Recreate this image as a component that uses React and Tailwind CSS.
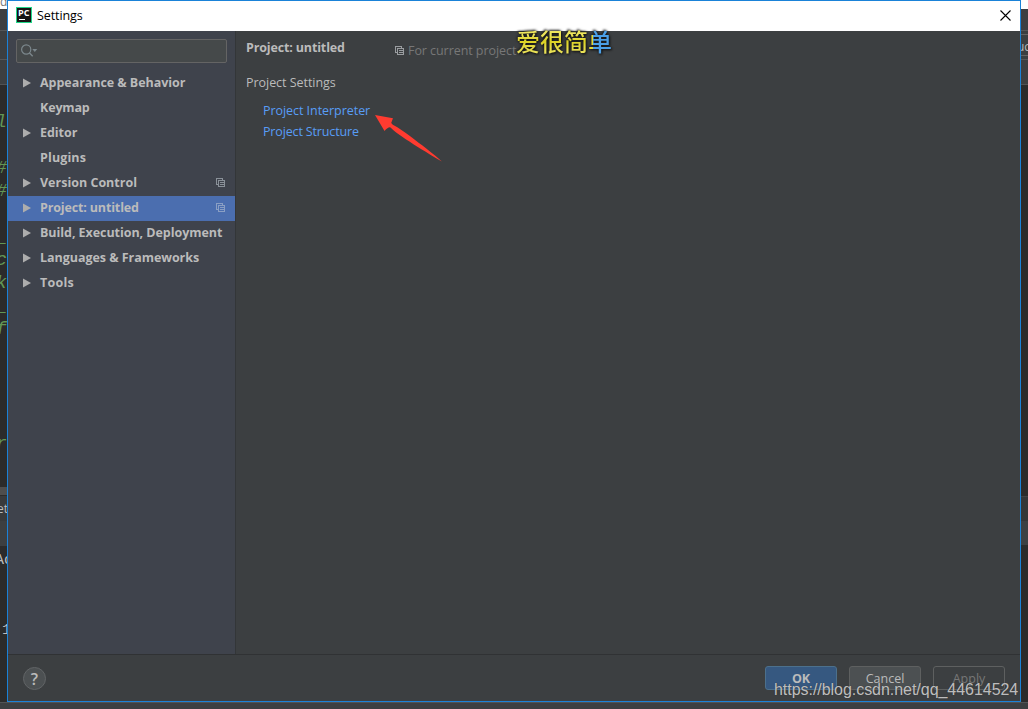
import React from "react";

function CopyIcon({ className = "" }) {
  return (
    <svg className={`shrink-0 ${className}`} width="10" height="10" viewBox="0 0 10 10" fill="none" stroke="currentColor" shapeRendering="crispEdges">
      <path d="M2.5 6.5h-2v-6h6v2" />
      <path d="M2.5 2.5h6v6h-6z" />
      <path d="M4 4.5h4M4 6.5h4" />
    </svg>
  );
}

const items = [
  { label: "Appearance & Behavior", arrow: true, tracking: "tracking-[-0.05px]" },
  { label: "Keymap", tracking: "tracking-[-0.15px]" },
  { label: "Editor", arrow: true, tracking: "tracking-[-0.05px]" },
  { label: "Plugins", tracking: "tracking-[0.12px]" },
  { label: "Version Control", arrow: true, copy: true, tracking: "tracking-[0px]" },
  { label: "Project: untitled", arrow: true, copy: true, selected: true, tracking: "tracking-[-0.15px]" },
  { label: "Build, Execution, Deployment", arrow: true, tracking: "tracking-[-0.05px]" },
  { label: "Languages & Frameworks", arrow: true, tracking: "tracking-[-0.04px]" },
  { label: "Tools", arrow: true, tracking: "tracking-[0.25px]" },
];

function NavItem({ label, arrow, copy, selected, tracking }) {
  return (
    <div className={`flex h-[25px] items-center pr-[9px] pb-[2px] pl-[15px] ${selected ? "bg-[#4b6eaf]" : ""}`}>
      <svg className="mr-[9px] shrink-0" width="8" height="10" viewBox="0 0 8 10">
        {arrow && <path d="M0 .5 8 5 0 9.5z" fill="#adadad" />}
      </svg>
      <span className={`flex-1 whitespace-nowrap text-[12.5px] leading-[23px] font-bold text-[#bbbbbb] ${tracking}`}>{label}</span>
      {copy && <CopyIcon className={selected ? "text-[#8a9fc4]" : "text-[#8a9199]"} />}
    </div>
  );
}

const code = [
  ["h-[36px] pt-[13px]", "l"],
  ["h-[46px] pt-[23px]", "#,"],
  ["h-[23px]", "#,"],
  ["h-[46px] pt-[23px]", "_"],
  ["h-[23px]", "c"],
  ["h-[23px]", "k"],
  ["h-[23px]", "_"],
  ["h-[23px]", "f"],
];

function LeftEditor() {
  return (
    <div className="flex h-[702px] w-[7px] shrink-0 flex-col overflow-hidden bg-[#2b2b2b]">
      <div className="h-[9px] shrink-0 overflow-hidden bg-white text-[12px] leading-[4px] text-[#777]">d</div>
      <div className="h-[22px] shrink-0 border-b border-[#555759] bg-[#3c3f41]" />
      <div className="h-[29px] shrink-0 border-b border-[#555759] bg-[#3c3f41]" />
      <div className="h-[25px] shrink-0 border-b border-[#515355] bg-[#3c3f41]" />
      <div className="flex h-[402px] shrink-0 flex-col pt-[13px] font-['Liberation_Mono',monospace] text-[18px] leading-[23px] text-[#629755] italic">
        {code.map(([cls, t], i) => (
          <div key={i} className={`-ml-[4px] shrink-0 whitespace-nowrap ${cls}`}>{t}</div>
        ))}
        <div className="-ml-[4px] pt-[92px]">r</div>
      </div>
      <div className="h-[8px] shrink-0 bg-[#4e4e4e]" />
      <div className="h-[26px] shrink-0 border-t border-[#2b2b2b] bg-[#383a3c] text-[12px] leading-[26px] text-[#bbb]"><span className="-ml-[3px]">et</span></div>
      <div className="h-[25px] shrink-0 bg-[#3c3f41]" />
      <div className="flex flex-1 flex-col font-['Liberation_Mono',monospace] text-[15px] text-[#bbb]">
        <div className="-ml-[5px] h-[70px] leading-[30px] whitespace-nowrap">Ac</div>
        <div className="-ml-[7px] leading-[30px] whitespace-nowrap">.1</div>
      </div>
    </div>
  );
}

function RightEditor() {
  return (
    <div className="flex h-[702px] w-[7px] shrink-0 flex-col overflow-hidden bg-[#2b2b2b]">
      <div className="h-[9px] shrink-0 bg-white" />
      <div className="h-[22px] shrink-0 border-b border-[#555759] bg-[#3c3f41]" />
      <div className="h-[3px] shrink-0 bg-[#3c3f41]" />
      <div className="h-[22px] shrink-0 border-y border-[#646464] bg-[#3c3f41] text-[12px] leading-[23px] text-[#bbb]"><span className="-ml-[4px]">uc</span></div>
      <div className="h-[4px] shrink-0 border-b border-[#555759] bg-[#3c3f41]" />
      <div className="h-[25px] shrink-0 border-b border-[#515355] bg-[#3c3f41]" />
      <div className="h-[411px] shrink-0" />
      <div className="h-[25px] shrink-0 border-t border-[#414345] bg-[#343638]" />
      <div className="h-[24px] shrink-0 bg-[#3c4043]" />
    </div>
  );
}

function Titlebar() {
  return (
    <div className="flex h-[30px] shrink-0 items-center bg-white pr-[10px] pl-[8px]">
      <svg className="mb-[2px]" width="16" height="16" viewBox="0 0 16 16">
        <rect width="16" height="16" fill="#21d789" />
        <rect x="1" y="1" width="14" height="14" fill="#151515" />
        <text x="2" y="8.6" fontSize="9" fontWeight="700" fill="#fff" textLength="11.5" lengthAdjust="spacingAndGlyphs" className="font-['Open_Sans',sans-serif]">PC</text>
        <rect x="3" y="12" width="6" height="1" fill="#fff" />
      </svg>
      <span className="ml-[5px] flex-1 text-[12.5px] tracking-[-0.1px] text-black">Settings</span>
      <svg className="-mr-px mb-[2px]" width="11" height="11" viewBox="0 0 11 11" stroke="#000" strokeWidth="1.1">
        <path d="M.5.5l10 10M10.5.5l-10 10" />
      </svg>
    </div>
  );
}

function Sidebar() {
  return (
    <div className="flex w-[228px] shrink-0 flex-col border-r border-[#333638] bg-[#3f434c]">
      <div className="mt-[8px] ml-[8px] flex h-[24px] w-[211px] shrink-0 items-center rounded-[2px] border border-[#646464] bg-[#45494a] pl-[4px]">
        <svg className="mb-px" width="17" height="13" viewBox="0 0 17 13" fill="none" stroke="#7b878c">
          <circle cx="5.2" cy="5.5" r="4.6" strokeWidth="1.2" />
          <path d="M8.3 8.8l3.4 3.4" strokeWidth="1.4" />
          <path d="M11.3 5h5l-2.500 3z" fill="#7b878c" stroke="none" />
        </svg>
      </div>
      <div className="mt-[8px] flex flex-col">
        {items.map((it) => <NavItem key={it.label} {...it} />)}
      </div>
    </div>
  );
}

function Content() {
  return (
    <div className="flex flex-1 flex-col pl-[10px] text-[12.5px] text-[#bbbbbb]">
      <div className="flex h-[34px] shrink-0 whitespace-nowrap">
        <div className="w-[149px] pt-[6px] leading-[22px] font-bold tracking-[-0.15px]">Project: untitled</div>
        <div className="mt-[9px] flex h-[22px] items-center text-[#777777]">
          <CopyIcon className="mr-[3px] text-[#9a9da0]" />
          <span className="leading-[22px] tracking-[-0.06px]">For current project</span>
        </div>
      </div>
      <div className="mt-[7px] h-[22px] leading-[22px] tracking-[-0.04px]">Project Settings</div>
      <div className="mt-[6px] ml-[17px] flex flex-col leading-[21px] text-[#589df6]">
        <a className="tracking-[-0.05px]">Project Interpreter</a>
        <a className="tracking-[-0.15px]">Project Structure</a>
      </div>
    </div>
  );
}

export default function App() {
  return (
    <div className="relative flex h-[709px] w-[1028px] flex-col overflow-hidden bg-[#3c3f41] font-['Open_Sans','Noto_Sans',sans-serif]">
      <div className="flex h-[702px] shrink-0">
        <LeftEditor />
        <div className="flex h-[702px] w-[1014px] flex-col border border-[#1a82d8] bg-[#3c3f41]">
          <Titlebar />
          <div className="flex h-[623px] shrink-0">
            <Sidebar />
            <Content />
          </div>
          <div className="flex flex-1 items-start border-t border-[#303234] pr-[15px] pl-[15px] text-[12.5px]">
            <div className="mt-[12px] flex h-[23px] w-[23px] items-center justify-center rounded-full border border-[#616466] bg-[#4c5052] text-[16px] font-semibold text-[#bbbbbb]">?</div>
            <div className="mt-[11px] ml-auto flex gap-[12px] leading-[22px]">
              <div className="h-[24px] w-[72px] rounded-[3px] border border-[#4c708c] bg-[#365880] pt-[1px] text-center font-bold text-[#bbbbbb]">OK</div>
              <div className="h-[24px] w-[72px] rounded-[3px] border border-[#5e6060] bg-[#4c5052] pt-[1px] text-center text-[#bbbbbb]">Cancel</div>
              <div className="h-[24px] w-[72px] rounded-[3px] border border-[#5e6060] pt-[1px] text-center text-[#777777]">Apply</div>
            </div>
          </div>
        </div>
        <RightEditor />
      </div>
      <div className="h-[7px] shrink-0 border-t border-[#515355] bg-[#3c3f41]" />

      <svg className="absolute top-[114px] left-[374px]" width="70" height="50" viewBox="0 0 70 50">
        <path d="M1 1 19 4.300 17.200 9Q18 10.500 22 12.500C30 17 60 40 68 47.500C55 40 22 20 16.500 13.500Q14.500 12.500 10.500 17z" fill="#ff3b30" />
      </svg>
      <div className="absolute top-[24px] left-[516px] flex font-['Noto_Sans_CJK_SC',sans-serif] text-[24px] leading-[34px] font-medium whitespace-nowrap [filter:drop-shadow(1px_1px_1px_#111)_drop-shadow(-1px_-1px_1px_#222)]">
        <span className="bg-linear-to-b from-[#eee65c] from-30% via-[#dcd21e] to-[#f0e86a] bg-clip-text text-transparent">爱很简</span>
        <span className="bg-linear-to-r from-[#e3d936] from-22% to-[#4ba0e8] to-22% bg-clip-text text-transparent">单</span>
      </div>
      <div className="absolute top-[680px] left-[774px] font-['Liberation_Sans',sans-serif] text-[16px] leading-[20px] tracking-[-0.04px] whitespace-nowrap text-[#d0d0d0]/90 [text-shadow:0_0_1px_#333]">https://blog.csdn.net/qq_44614524</div>
    </div>
  );
}
